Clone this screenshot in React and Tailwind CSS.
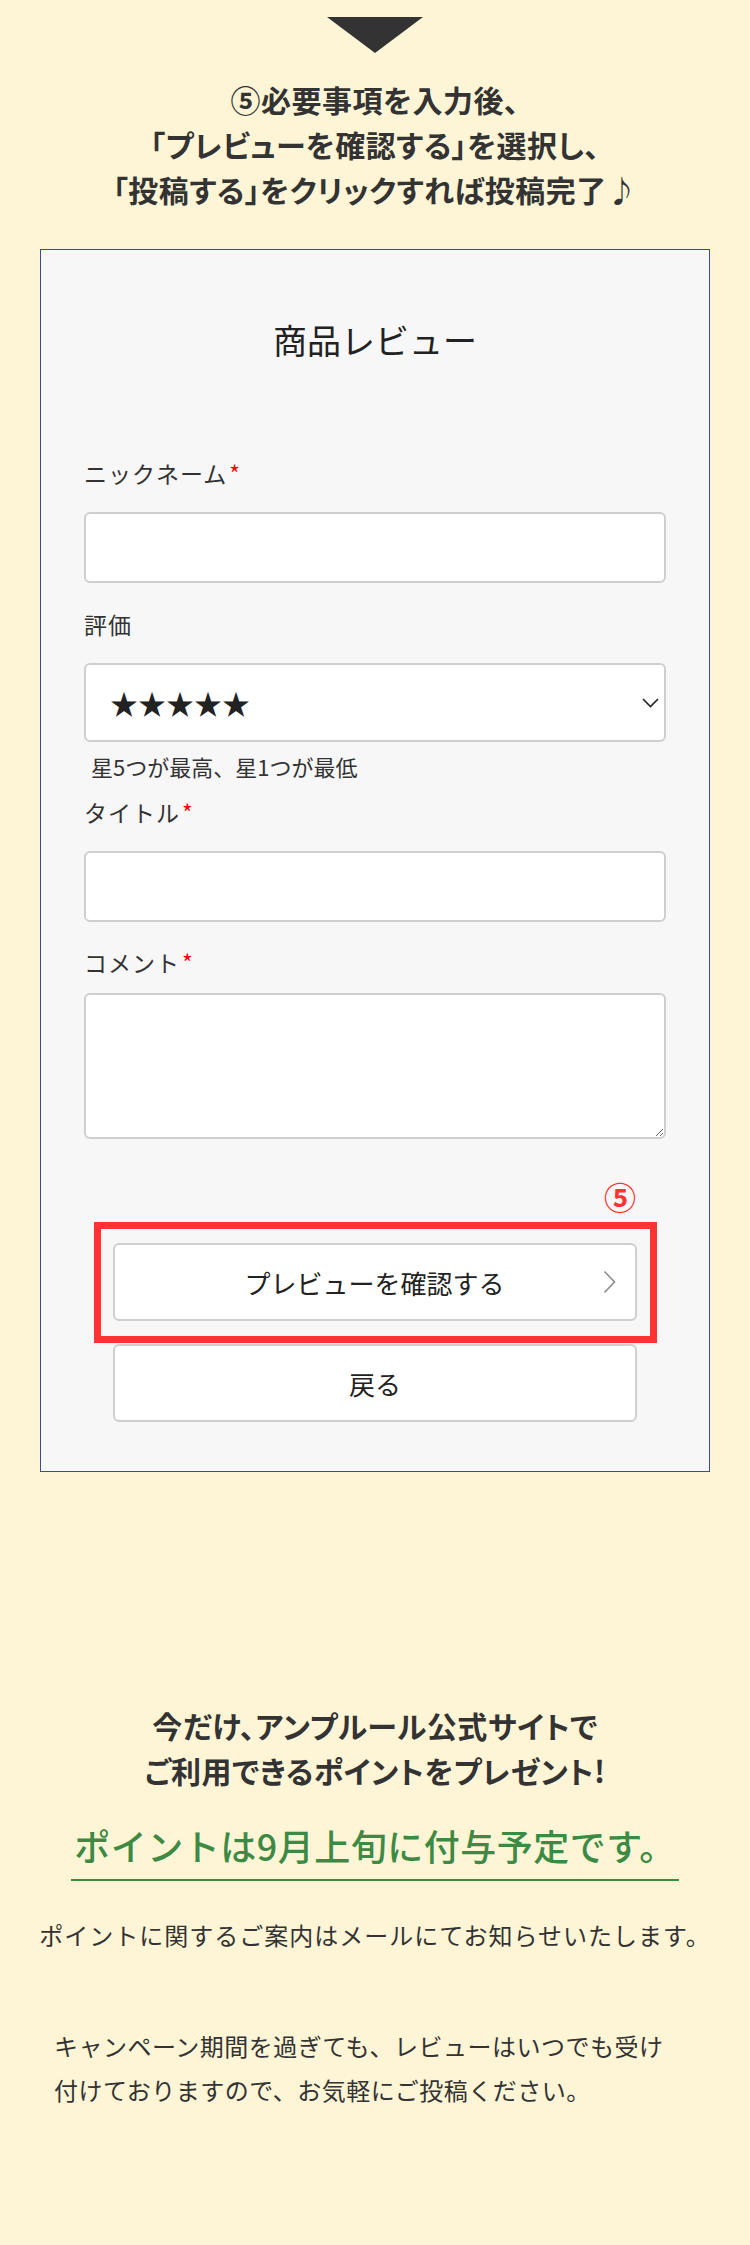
const FONT = {
  fontFamily: '"Noto Sans CJK JP", "Noto Sans", sans-serif',
};

function Label({ children, required, className = "" }) {
  return (
    <div className={`text-[23px] leading-[34px] tracking-[1px] text-[#333] ${className}`}>
      {children}
      {required && <span className="text-[#ff0000] ml-[2px]">*</span>}
    </div>
  );
}

function Field({ className = "" }) {
  return (
    <input
      type="text"
      className={`block w-full h-[71px] bg-white border-2 border-[#cfcfcf] rounded-[6px] ${className}`}
    />
  );
}

export default function App() {
  return (
    <div className="w-[750px] min-h-[2245px] bg-[#fdf5d5] pt-[17px] pb-[120px]" style={FONT}>
      {/* Arrow */}
      <svg width="96" height="36" viewBox="0 0 96 36" className="block mx-auto">
        <polygon points="0,0 96,0 48,36" fill="#333333" />
      </svg>

      {/* Step heading */}
      <h2 className="mt-[24px] text-center text-[30px] leading-[45px] font-bold tracking-[0.5px] text-[#333] [font-feature-settings:'palt']">
        ⑤必要事項を入力後、
        <br />
        「プレビューを確認する」を選択し、
        <br />
        「投稿する」をクリックすれば投稿完了♪
      </h2>

      {/* Review form mock */}
      <div className="mt-[37px] mx-[40px] border border-[#3b4b9b] bg-[#f7f7f7] pb-[49px]">
        <h3 className="pt-[66px] text-center text-[34px] leading-[48px] text-[#222]">
          商品レビュー
        </h3>

        <div className="px-[43px]">
          <Label required className="mt-[92px]">
            ニックネーム
          </Label>
          <Field className="mt-[22px]" />

          <Label className="mt-[24px]">評価</Label>
          <div className="mt-[22px] flex items-center justify-between h-[79px] bg-white border-2 border-[#cfcfcf] rounded-[6px] pl-[24px] pr-[5px]">
            <span className="text-[28px] leading-none text-[#222]">★★★★★</span>
            <svg width="17" height="10" viewBox="0 0 17 10">
              <polyline points="1,1 8.5,8.5 16,1" fill="none" stroke="#222" strokeWidth="1.6" />
            </svg>
          </div>
          <div className="mt-[9px] pl-[7px] text-[22px] leading-[30px] text-[#333]">
            星5つが最高、星1つが最低
          </div>

          <Label required className="mt-[14px]">
            タイトル
          </Label>
          <Field className="mt-[22px]" />

          <Label required className="mt-[23px]">
            コメント
          </Label>
          <textarea className="mt-[14px] block w-full h-[146px] bg-white border-2 border-[#cfcfcf] rounded-[6px]" />
        </div>

        {/* Step marker */}
        <div className="mt-[40px] flex justify-end pr-[73px]">
          <span className="text-[32px] leading-[34px] font-bold text-[#ff3333]">⑤</span>
        </div>

        {/* Highlighted button */}
        <div className="mt-[9px] mx-auto w-[563px] border-[7px] border-[#ff3333] pt-[14px] pb-[15px] pl-[12px] pr-[13px]">
          <button className="relative w-[524px] h-[78px] bg-white border-2 border-[#cfcfcf] rounded-[6px] text-[26px] text-[#222] flex items-center justify-center">
            プレビューを確認する
            <svg
              width="13"
              height="23"
              viewBox="0 0 13 23"
              className="absolute right-[19px] top-1/2 -translate-y-1/2"
            >
              <polyline points="1.5,1 11.5,11.5 1.5,22" fill="none" stroke="#8a8a8a" strokeWidth="1.6" />
            </svg>
          </button>
        </div>
        <button className="mt-[1px] mx-auto block w-[524px] h-[78px] bg-white border-2 border-[#cfcfcf] rounded-[6px] text-[26px] text-[#222]">
          戻る
        </button>
      </div>

      {/* Campaign info */}
      <p className="mt-[231px] text-center text-[30px] leading-[45px] font-bold tracking-[0.5px] text-[#333] [font-feature-settings:'palt']">
        今だけ、アンプルール公式サイトで
        <br />
        ご利用できるポイントをプレゼント!
      </p>

      <div className="mt-[26px] flex justify-center">
        <p className="border-b-2 border-[#3d8a45] px-[3px] pb-[8px] text-[36px] leading-[52px] tracking-[0.5px] font-medium text-[#3d8a45]">
          ポイントは9月上旬に付与予定です。
        </p>
      </div>

      <p className="mt-[36px] text-center text-[24px] leading-[36px] tracking-[1px] text-[#333]">
        ポイントに関するご案内はメールにてお知らせいたします。
      </p>

      <p className="mt-[71px] pl-[54px] text-[24px] leading-[44px] tracking-[0.5px] text-[#333] whitespace-nowrap">
        キャンペーン期間を過ぎても、レビューはいつでも受け
        <br />
        付けておりますので、お気軽にご投稿ください。
      </p>
    </div>
  );
}
